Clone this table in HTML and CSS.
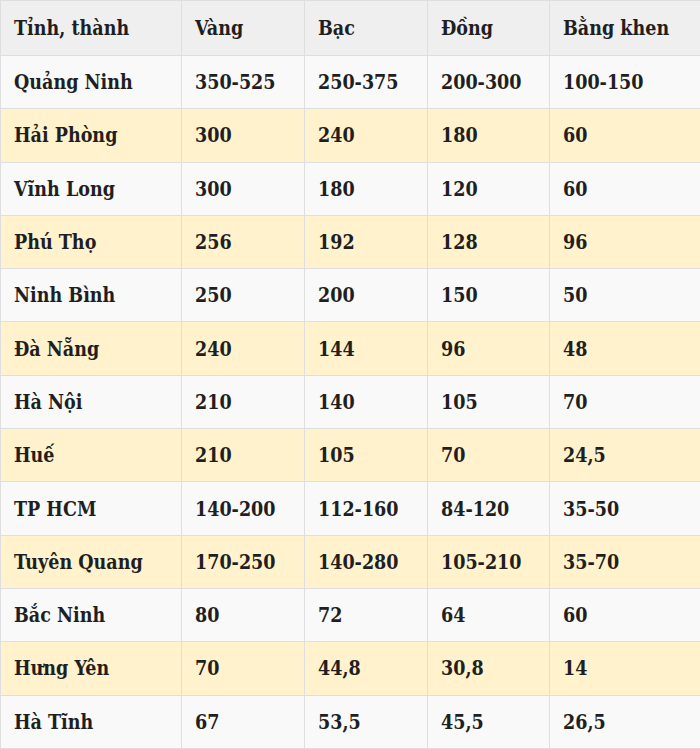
FILE: index.html
```html
<!DOCTYPE html>
<html lang="vi">
<head>
<meta charset="utf-8">
<link rel="stylesheet" href="styles.css">
</head>
<body>
<table class="prize">
<colgroup><col class="c1"><col class="c2"><col class="c3"><col class="c4"><col class="c5"></colgroup>
<thead>
<tr><th>Tỉnh, thành</th><th>Vàng</th><th>Bạc</th><th>Đồng</th><th>Bằng khen</th></tr>
</thead>
<tbody>
<tr><td>Quảng Ninh</td><td>350-525</td><td>250-375</td><td>200-300</td><td>100-150</td></tr>
<tr class="alt"><td>Hải Phòng</td><td>300</td><td>240</td><td>180</td><td>60</td></tr>
<tr><td>Vĩnh Long</td><td>300</td><td>180</td><td>120</td><td>60</td></tr>
<tr class="alt"><td>Phú Thọ</td><td>256</td><td>192</td><td>128</td><td>96</td></tr>
<tr><td>Ninh Bình</td><td>250</td><td>200</td><td>150</td><td>50</td></tr>
<tr class="alt"><td>Đà Nẵng</td><td>240</td><td>144</td><td>96</td><td>48</td></tr>
<tr><td>Hà Nội</td><td>210</td><td>140</td><td>105</td><td>70</td></tr>
<tr class="alt"><td>Huế</td><td>210</td><td>105</td><td>70</td><td>24,5</td></tr>
<tr><td>TP HCM</td><td>140-200</td><td>112-160</td><td>84-120</td><td>35-50</td></tr>
<tr class="alt"><td>Tuyên Quang</td><td>170-250</td><td>140-280</td><td>105-210</td><td>35-70</td></tr>
<tr><td>Bắc Ninh</td><td>80</td><td>72</td><td>64</td><td>60</td></tr>
<tr class="alt"><td>Hưng Yên</td><td>70</td><td>44,8</td><td>30,8</td><td>14</td></tr>
<tr><td>Hà Tĩnh</td><td>67</td><td>53,5</td><td>45,5</td><td>26,5</td></tr>
</tbody>
</table>
</body>
</html>
```
FILE: styles.css
```css
html, body { margin: 0; padding: 0; background: #ffffff; }
.prize {
  width: 700px;
  border-collapse: collapse;
  table-layout: fixed;
  font-family: "DejaVu Serif Condensed", "DejaVu Serif", "Liberation Serif", serif;
  font-weight: bold;
  font-size: 19.5px;
  color: #1f1f1f;
}
.c1 { width: 181px; }
.c2 { width: 123px; }
.c3 { width: 123px; }
.c4 { width: 122px; }
.c5 { width: 151px; }
.prize th, .prize td {
  border: 1px solid #dedede;
  text-align: left;
  padding: 1px 0 0 13px;
  height: 52.3px;
  box-sizing: border-box;
  white-space: nowrap;
}
.prize th, .prize td { height: 53.3px; }
.prize th { background: #efefef; height: 55px; font-weight: bold; }
.prize td { background: #f9f9f9; }
.prize tr.alt td { background: #fff2cc; }
```
